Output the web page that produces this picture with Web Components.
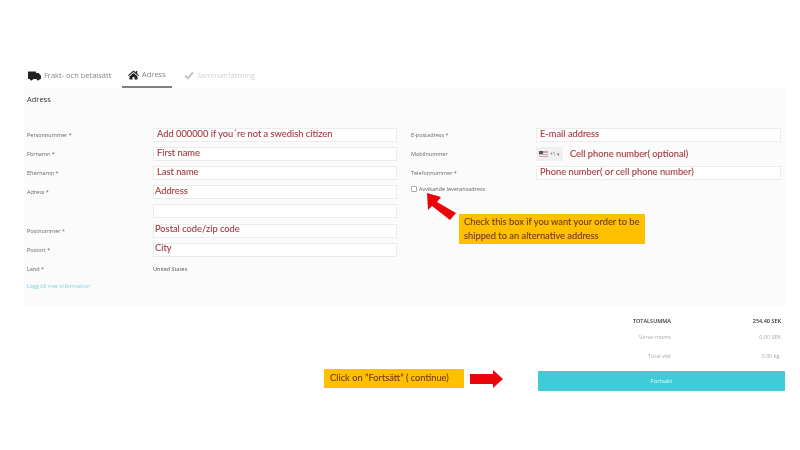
<!DOCTYPE html>
<html><head><meta charset="utf-8">
<style>
html,body{margin:0;padding:0;background:#fff}
body{width:800px;height:450px;overflow:hidden;font-family:"Open Sans",sans-serif}
</style></head><body>
<checkout-page>
  <tab-bar slot="tabs"></tab-bar>
  <address-panel slot="panel"></address-panel>
  <order-summary slot="summary"></order-summary>
</checkout-page>
<script>
function tpl(html){const t=document.createElement('template');t.innerHTML=html;return t}
class Base extends HTMLElement{
  constructor(){super();this.attachShadow({mode:'open'}).appendChild(this.constructor.t.content.cloneNode(true))}
}
class CheckoutPage extends Base{static t=tpl(`<style>
:host{display:flex;flex-direction:column;width:800px;height:450px;padding:65px 15px 0 24px;box-sizing:border-box;position:relative;filter:blur(.3px)}
.callout{position:absolute;background:#ffc000;color:#6e3c05;font:400 9.300px/14px Lato,sans-serif;-webkit-text-stroke:.1px currentColor;box-sizing:border-box;white-space:nowrap}
.a{left:459px;top:214px;width:186px;height:30px;padding:1px 5px}
.b{left:324px;top:369px;width:140px;height:19px;padding:2px 6px}
svg{position:absolute}
</style>
<slot name="tabs"></slot><slot name="panel"></slot><slot name="summary"></slot>
<div class="callout a">Check this box if you want your order to be<br>shipped to an alternative address</div>
<div class="callout b">Click on ”Fortsätt” ( continue)</div>
<svg style="left:425px;top:192px" width="34" height="30" viewBox="0 0 34 30"><path fill="#e8060c" d="M2 1 16 5 12 10 31 21 25 28 7 14 3 18Z"/></svg>
<svg style="left:469px;top:369px" width="36" height="20" viewBox="0 0 36 20"><path fill="#e8060c" d="M1 5H24V1L34 10 24 19V15H1Z"/></svg>`)}
class TabBar extends Base{static t=tpl(`<style>
:host{display:flex;height:23px;font:400 7.500px/1 "Open Sans",sans-serif;color:#888;padding-left:4px}
.tab{display:flex;align-items:center;gap:3px;height:23px;box-sizing:border-box;padding-bottom:2px;white-space:nowrap}
.t1{width:94px}
.t2{width:50px;padding-left:6px;border-bottom:2px solid #808080;margin-right:12px}
.t3{color:#d2d2d2}
svg{display:block;flex:none}
</style>
<div class="tab t1"><svg width="13" height="10" viewBox="0 0 13 10"><path fill="#222" d="M0 0.500H8V2H10.500L13 4.800V8H11.800A1.700 1.700 0 0 1 8.500 8H5A1.700 1.700 0 0 1 1.700 8H0Z"/><circle cx="3.300" cy="8.300" r="1.100" fill="#222"/><circle cx="10.100" cy="8.300" r="1.100" fill="#222"/></svg><span>Frakt- och betalsätt</span></div>
<div class="tab t2"><svg width="11" height="10" viewBox="0 0 11 10"><path fill="#222" d="M5.500 0.500 7.800 2.500V1H9.200V3.700L11 5.300 10.300 6 5.500 1.900 0.700 6 0 5.300ZM5.500 3 9.500 6.400V9.500H6.500V7H4.500V9.500H1.500V6.400Z"/></svg><span>Adress</span></div>
<div class="tab t3"><svg width="10" height="9" viewBox="0 0 10 9"><path fill="none" stroke="#c4c4c4" stroke-width="2" d="M1 4.500 3.800 7.200 9 1.500"/></svg><span>Sammanfattning</span></div>`)}
class FormRow extends Base{static t=tpl(`<style>
:host{display:grid;align-items:center;height:14px;margin-bottom:5.200px}
:host([side=l]){grid-template-columns:126px 244px}
:host([side=r]){grid-template-columns:125px 245px}
.lab{font:400 5.500px/14px "Open Sans",sans-serif;color:#666;white-space:nowrap}
.box{height:14px;background:#fff;border:1px solid #ebebeb;box-sizing:border-box;font:400 9.300px/12px Lato,sans-serif;-webkit-text-stroke:.1px currentColor;color:#a33a3f;padding-left:3px;white-space:nowrap;display:flex;align-items:center}
:host([tight]) .box{padding-left:1px}
:host([tight]) .txt{margin-top:-3px}
.txt{margin-top:-1px}
</style><span class="lab"></span><div class="box"><span class="txt"><slot></slot></span></div>`);
connectedCallback(){this.shadowRoot.querySelector('.lab').textContent=this.getAttribute('label')||''}}
class PhoneRow extends Base{static t=tpl(`<style>
:host{display:grid;grid-template-columns:125px 245px;align-items:center;height:14px;margin-bottom:5.200px}
.lab{font:400 5.500px/14px "Open Sans",sans-serif;color:#666}
.v{display:flex;align-items:center;font:400 9.300px/14px Lato,sans-serif;-webkit-text-stroke:.1px currentColor;color:#a33a3f;white-space:nowrap}
.cc{display:flex;align-items:center;gap:2px;width:27px;height:14px;background:#f0f0f0;box-sizing:border-box;padding-left:3px;font:400 5px/14px "Open Sans",sans-serif;-webkit-text-stroke:0;color:#777;margin-right:7px}
svg{display:block}
</style><span class="lab">Mobilnummer</span><div class="v"><span class="cc"><svg width="9" height="6" viewBox="0 0 9 6"><rect width="9" height="6" fill="#c9a7ac"/><rect y="2" width="9" height="1" fill="#eee"/><rect y="4" width="9" height="1" fill="#eee"/><rect width="4" height="3" fill="#556"/></svg>+1 ▾</span>Cell phone number( optional)</div>`)}
class AddressPanel extends Base{static t=tpl(`<style>
:host{display:block;height:218px;background:#fbfbfb;padding:6px 3px 0;box-sizing:border-box}
h2{margin:0 0 22.600px;font:400 7.500px/11px "Open Sans",sans-serif;color:#333}
.cols{display:flex}
.l{width:384px}
.plain{display:grid;grid-template-columns:126px 1fr;font:400 5.500px/14px "Open Sans",sans-serif;color:#666;height:14px;margin-bottom:3px}
.plain b{font-weight:400;color:#555}
a{display:block;font:400 5.500px/14px "Open Sans",sans-serif;color:#7fd3dc}
.chk{display:flex;align-items:center;gap:2px;margin-top:1px;font:400 5.500px/8px "Open Sans",sans-serif;color:#666}
.chk i{width:4px;height:4px;border:1px solid #aaa;border-radius:1px;background:#fff;display:block}
</style>
<h2>Adress</h2>
<div class="cols"><div class="l">
<form-row side="l" label="Personnummer *">Add 000000 if you´re not a swedish citizen</form-row>
<form-row side="l" label="Förnamn *">First name</form-row>
<form-row side="l" label="Efternamn *">Last name</form-row>
<form-row side="l" tight label="Adress *">Address</form-row>
<form-row side="l"></form-row>
<form-row side="l" tight label="Postnummer *">Postal code/zip code</form-row>
<form-row side="l" tight label="Postort *">City</form-row>
<div class="plain"><span>Land *</span><b>United States</b></div>
<a>Lägg till mer information</a>
</div><div class="r">
<form-row side="r" label="E-postadress *">E-mail address</form-row>
<phone-row></phone-row>
<form-row side="r" label="Telefonnummer *">Phone number( or cell phone number)</form-row>
<div class="chk"><i></i>Avvikande leveransadress</div>
</div></div>`)}
class OrderSummary extends Base{static t=tpl(`<style>
:host{display:block;padding-top:10px;font:400 5.500px/10px "Open Sans",sans-serif;color:#aaa}
.row{display:grid;grid-template-columns:647px 110px;text-align:right;height:10px;margin-bottom:9px}
.row.top{color:#333;font-weight:600;margin-bottom:6px}
button{display:block;margin:10px 0 0 514px;width:247px;height:20px;background:#3fcbd8;border:0;border-radius:1px;color:#e8fbfd;font:400 6px/20px "Open Sans",sans-serif;padding:0}
</style>
<div class="row top"><span>TOTALSUMMA</span><span>254,40 SEK</span></div>
<div class="row"><span>Varav moms</span><span>0,00 SEK</span></div>
<div class="row"><span>Total vikt</span><span>0,00 kg.</span></div>
<button>Fortsätt</button>`)}
customElements.define('form-row',FormRow);
customElements.define('phone-row',PhoneRow);
customElements.define('tab-bar',TabBar);
customElements.define('address-panel',AddressPanel);
customElements.define('order-summary',OrderSummary);
customElements.define('checkout-page',CheckoutPage);
</script>
</body></html>
